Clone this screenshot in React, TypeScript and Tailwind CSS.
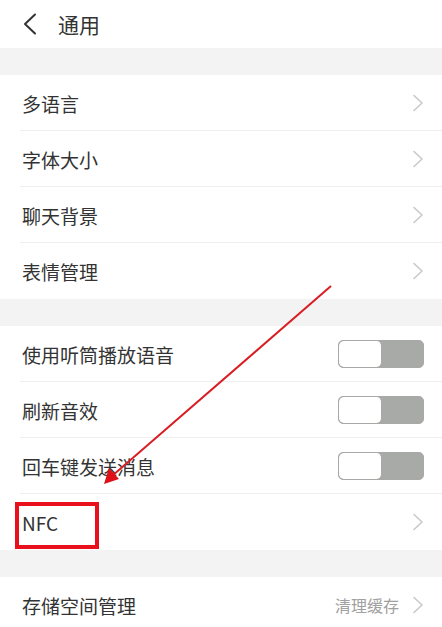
import React from 'react';

const font = { fontFamily: '"Noto Sans CJK SC", "Noto Sans", sans-serif' };

const Chevron = () => (
  <svg width="12" height="18" viewBox="0 0 12 18" className="shrink-0">
    <path d="M2 1.5 L10 9 L2 16.5" fill="none" stroke="#c9c9c9" strokeWidth="1.6" strokeLinecap="round" strokeLinejoin="round" />
  </svg>
);

const Toggle = () => (
  <div className="flex w-[86px] h-[28px] rounded-[5px] border border-[#a8a9a7] overflow-hidden bg-[#a8aaa7]">
    <div className="w-[43px] h-full bg-white rounded-[5px] border-r border-[#a8a9a7]" />
  </div>
);

interface RowProps {
  label: string;
  right?: React.ReactNode;
  divider?: boolean;
}

const Row: React.FC<RowProps> = ({ label, right, divider }) => (
  <div className="relative h-[56px] flex items-center pl-[22px] pr-[18px] bg-white">
    <span className="flex-1 text-[19px] text-[#333] leading-none">{label}</span>
    {right ?? <Chevron />}
    {divider && <div className="absolute left-[20px] right-0 bottom-0 h-px bg-[#eeeeee]" />}
  </div>
);

const Gap = () => <div className="h-[27px] bg-[#f3f3f3]" />;

export default function App() {
  return (
    <div className="relative w-[442px] h-[627px] overflow-hidden bg-[#f3f3f3]" style={font}>
      {/* header */}
      <div className="h-[48px] bg-white flex items-center pl-[22px]">
        <svg width="16" height="22" viewBox="0 0 16 22">
          <path d="M13 1.5 L3 11 L13 20.5" fill="none" stroke="#333" strokeWidth="2" strokeLinecap="round" strokeLinejoin="round" />
        </svg>
        <span className="ml-[20px] text-[21px] text-[#333] leading-none">通用</span>
      </div>
      <Gap />
      <Row label="多语言" divider />
      <Row label="字体大小" divider />
      <Row label="聊天背景" divider />
      <Row label="表情管理" />
      <Gap />
      <Row label="使用听筒播放语音" right={<Toggle />} divider />
      <Row label="刷新音效" right={<Toggle />} divider />
      <Row label="回车键发送消息" right={<Toggle />} divider />
      <Row label="NFC" />
      <Gap />
      <Row
        label="存储空间管理"
        right={
          <div className="flex items-center gap-[13px]">
            <span className="text-[16px] text-[#a0a0a0] leading-none">清理缓存</span>
            <Chevron />
          </div>
        }
      />

      {/* annotation */}
      <div className="absolute left-[15px] top-[502px] w-[84px] h-[47px] border-[4px] border-[#e8101a]" />
      <svg className="absolute left-0 top-0 pointer-events-none" width="442" height="627">
        <line x1="331" y1="286" x2="112" y2="476" stroke="#d81e25" strokeWidth="2" />
        <polygon points="104,484 109,468 119,479" fill="#e01018" />
      </svg>
    </div>
  );
}
